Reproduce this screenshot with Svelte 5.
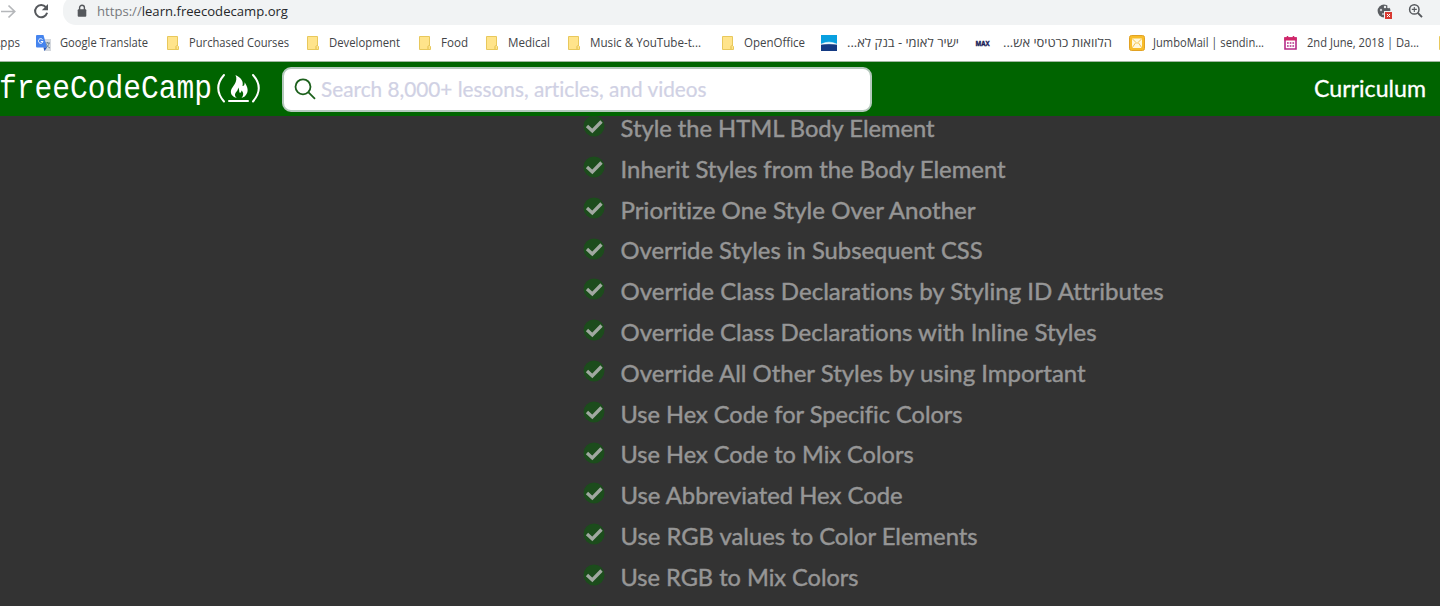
<script>
  const bookmarks = [
    { icon: 'translate', before: 16, iconWidth: 16, gap: 8, label: 'Google Translate', width: 88 },
    { icon: 'folder', before: 19, iconWidth: 12, gap: 10, label: 'Purchased Courses', width: 100 },
    { icon: 'folder', before: 18, iconWidth: 12, gap: 10, label: 'Development', width: 71 },
    { icon: 'folder', before: 19, iconWidth: 12, gap: 10, label: 'Food', width: 27 },
    { icon: 'folder', before: 18, iconWidth: 12, gap: 10, label: 'Medical', width: 42 },
    { icon: 'folder', before: 18, iconWidth: 12, gap: 10, label: 'Music & YouTube-t...', width: 111 },
    { icon: 'folder', before: 21, iconWidth: 12, gap: 10, label: 'OpenOffice', width: 61 },
    { icon: 'bank', before: 16, iconWidth: 16, gap: 10, label: 'ישיר לאומי - בנק לא...', width: 112, rtl: true },
    { icon: 'max', before: 16, iconWidth: 15, gap: 13, label: 'הלוואות כרטיסי אש...', width: 109, rtl: true },
    { icon: 'mail', before: 17, iconWidth: 16, gap: 8, label: 'JumboMail | sendin...', width: 111 },
    { icon: 'calendar', before: 20, iconWidth: 13, gap: 10, label: '2nd June, 2018 | Da...', width: 112 },
    { icon: 'folder', before: 20, iconWidth: 12, gap: 0, label: '', width: 0 }
  ];

  const lessons = [
    ['Style the HTML Body Element', 314],
    ['Inherit Styles from the Body Element', 385],
    ['Prioritize One Style Over Another', 355],
    ['Override Styles in Subsequent CSS', 362],
    ['Override Class Declarations by Styling ID Attributes', 543],
    ['Override Class Declarations with Inline Styles', 476],
    ['Override All Other Styles by using Important', 465],
    ['Use Hex Code for Specific Colors', 342],
    ['Use Hex Code to Mix Colors', 293],
    ['Use Abbreviated Hex Code', 282],
    ['Use RGB values to Color Elements', 357],
    ['Use RGB to Mix Colors', 238],
    ['', 0]
  ];
</script>

{#snippet label(text, width, rtl)}
  <svg class="label" width={width} height="20" direction={rtl ? 'rtl' : 'ltr'}>
    <text x={rtl ? width : 0} y="14" textLength={width} lengthAdjust="spacingAndGlyphs">{text}</text>
  </svg>
{/snippet}

<div class="page">
  <div class="toolbar">
    <svg class="nav" width="63" height="24" fill="none">
      <path d="M1 11.5H14M8.5 5.5L14.7 11.5L8.5 17.5" stroke="#b5b7ba" stroke-width="1.7" />
      <path d="M45.9 7.2A6.1 6.1 0 1 0 47.1 12.8" stroke="#55585c" stroke-width="2" />
      <path d="M48 4V10.2H41.8Z" fill="#55585c" />
    </svg>
    <div class="omnibox">
      <svg class="lock" width="10" height="14">
        <path d="M2.6 6V3.6a2.4 2.4 0 0 1 4.8 0V6" fill="none" stroke="#55585c" stroke-width="1.4" />
        <rect x="0.7" y="5.3" width="8.6" height="7.4" rx="1" fill="#55585c" />
      </svg>
      <svg class="url" width="194" height="22">
        <text x="0" y="15" textLength="191" lengthAdjust="spacingAndGlyphs"><tspan fill="#77797d">https://</tspan>learn.freecodecamp.org</text>
      </svg>
      <svg class="actions" width="50" height="22">
        <circle cx="7" cy="10" r="6.4" fill="#5a5d61" />
        <circle cx="4" cy="9" r="1.2" fill="#c9cbce" /><circle cx="8" cy="6" r="1.2" fill="#eef0f2" />
        <circle cx="11.5" cy="6" r="1.3" fill="#eef0f2" /><circle cx="6" cy="13" r="1" fill="#c9cbce" />
        <rect x="7.5" y="10.5" width="8" height="8" fill="#d83a32" stroke="#f1f3f4" />
        <path d="M10 13l3 3m0-3l-3 3" stroke="#fff" stroke-width="1" />
        <g fill="none" stroke="#55585c">
          <circle cx="37.3" cy="8.4" r="4.7" stroke-width="1.5" />
          <path d="M40.8 11.9L45 16.1" stroke-width="2" />
          <path d="M34.8 8.4h5M37.3 5.9v5" stroke-width="1.1" />
        </g>
      </svg>
    </div>
  </div>

  <div class="bookmarks">
    <div class="apps">{@render label('Apps', 27, false)}</div>
    {#each bookmarks as item}
      <div class="bookmark" style:margin-left="{item.before}px" style:gap="{item.gap}px">
        <svg class="favicon" width={item.iconWidth} height="16">
          {#if item.icon === 'folder'}
            <path d="M.5 1.5H10.5V10.5L11.5 11.5V14.5H.5Z" fill="#ffe48b" stroke="#e8c85c" />
            <path d="M9 14V11.5L10.5 10" fill="none" stroke="#e0bd48" />
          {:else if item.icon === 'translate'}
            <path d="M6 4H15V16H8Z" fill="#d4d8de" />
            <path d="M9 8h5M11.5 7v1M13 8c0 2-2 4-3 4.500M10 9c1 2 2 3 4 4" fill="none" stroke="#6f8797" />
            <path d="M1 0H7.500L11 12.500H1Q0 12.500 0 11.500V1Q0 0 1 0Z" fill="#4584ee" />
            <path d="M7.500 12.500H11L8.500 16Z" fill="#2458bd" />
            <path d="M6.500 4.500A2.300 2.300 0 1 0 7 6.500H4.800" fill="none" stroke="#fff" />
          {:else if item.icon === 'bank'}
            <path d="M0 0H16V9H0Z" fill="#08a0e0" /><path d="M0 9H16V16H0Z" fill="#143a83" />
            <path d="M0 9.300Q8 5 16 9.300Q8 8.200 0 9.300Z" fill="#fff" stroke="#fff" stroke-width=".5" />
          {:else if item.icon === 'max'}
            <text class="max" x="0.500" y="10.500" textLength="14" lengthAdjust="spacingAndGlyphs">MAX</text>
          {:else if item.icon === 'mail'}
            <rect x=".5" y=".5" width="15" height="15" rx="2" fill="#f8bd2a" stroke="#e2a223" />
            <path d="M3 3.500H13V13H3Z" fill="#fff8dc" />
            <path d="M3 3.500L8 8.500L13 3.500M3 13L6.500 8M13 13L9.500 8" fill="none" stroke="#f0b52a" stroke-width=".8" />
          {:else}
            <path d="M1 3H12V14H1Z" fill="#fff" stroke="#b52b88" stroke-width="1.600" />
            <path d="M0.300 2.300H12.700V5.500H.300Z" fill="#d12768" /><path d="M3.500 1V4M9.500 1V4" stroke="#d12768" stroke-width="1.500" />
            <path d="M3 8H10.500M3 11H10.500" stroke="#b52b88" stroke-width="1.600" stroke-dasharray="1.700 1" />
          {/if}
        </svg>
        {#if item.label}{@render label(item.label, item.width, item.rtl)}{/if}
      </div>
    {/each}
  </div>

  <header>
    <svg class="logo" width="264" height="54">
      <text class="wordmark" x="-1" y="35.500" textLength="213" lengthAdjust="spacingAndGlyphs">freeCodeCamp</text>
      <g fill="none" stroke="#fff" stroke-width="2" stroke-linecap="round">
        <path d="M224 13Q212.500 26 224 39.500" /><path d="M253 13Q264.500 26 253 39.500" />
        <path d="M229 39H248" />
      </g>
      <path d="M235.500 13C242 16 243.500 20 242.500 24C244.500 24 245 21.500 244.300 20C248 25 249 30 245.500 33.500C244.500 34.800 243 35.600 241.500 36C244.500 32.500 243 29.500 241.300 28.500C241.500 30.500 240.500 31 239.500 30.500C238.800 29.500 239.800 27.500 238 25.500C238.500 29 234.800 30.300 235 33C235 34.400 236 35.300 237 36C232.500 35 230.300 32 231 28.500C231.700 24.500 238.800 20 235.500 13Z" fill="#fff" />
    </svg>
    <div class="search">
      <svg width="24" height="24" fill="none" stroke="#1c601c" stroke-width="1.800">
        <circle cx="10" cy="9.800" r="7.500" /><path d="M15.500 15.300L22 21.800" />
      </svg>
      <svg class="placeholder" width="400" height="36"><text x="0" y="26" textLength="385.500" lengthAdjust="spacingAndGlyphs">Search 8,000+ lessons, articles, and videos</text></svg>
    </div>
    <svg class="curriculum" width="114" height="36"><text x="0" y="26" textLength="112" lengthAdjust="spacingAndGlyphs">Curriculum</text></svg>
  </header>

  <main>
    <ul>
      {#each lessons as [title, width]}
        <li>
          <svg class="check" width="24" height="24">
            <circle cx="12" cy="12" r="10.500" fill="#1c4c1c" />
            <path d="M5 12L10.300 17L19.500 7.500" fill="none" stroke="#a1a8a1" stroke-width="3.300" />
          </svg>
          {#if title}
            <svg class="lesson" width={width + 4} height="36"><text x="0.600" y="26.500" textLength={width} lengthAdjust="spacingAndGlyphs">{title}</text></svg>
          {/if}
        </li>
      {/each}
    </ul>
  </main>
</div>

<style>
  :global(body) { margin: 0; }
  .page { width: 1440px; height: 606px; overflow: hidden; display: flex; flex-direction: column; background: #fff; }
  svg { display: block; flex: none; }
  .toolbar { height: 25px; display: flex; flex: none; }
  .omnibox { flex: 1; background: #f1f3f4; border-radius: 13px 0 0 13px; margin-top: -4px; padding: 4px 13px 0 14px; display: flex; align-items: flex-start; }
  .lock { margin-top: 4px; }
  .url { margin-left: 10px; margin-top: 1px; font: 13px "Open Sans", sans-serif; fill: #25272a; }
  .actions { margin-left: auto; margin-top: 1px; }
  .bookmarks { height: 36px; flex: none; display: flex; align-items: center; border-bottom: 1px solid #a0b8a0; }
  .apps { margin-left: -7px; }
  .bookmark { display: flex; align-items: center; flex: none; }
  .label { overflow: visible; font: 12px "Open Sans", "Noto Sans", sans-serif; fill: #424447; }
  .favicon { overflow: visible; }
  .max { font: bold 7px "Open Sans", sans-serif; fill: #171b56; stroke: #171b56; stroke-width: .4; }
  header { height: 54px; flex: none; display: flex; align-items: center; background: #006400; position: relative; z-index: 1; }
  .wordmark { font: 34px "Liberation Mono", monospace; fill: #fff; }
  .search { box-sizing: border-box; width: 590px; height: 45px; margin-left: 18px; border: 2px solid #b5c9bd; border-radius: 9px; background: #fff; display: flex; align-items: center; padding-left: 9px; gap: 4px; }
  .placeholder { font: 22px Lato, sans-serif; font-variant-ligatures: none; fill: #d0d1e4; stroke: #d0d1e4; stroke-width: .2; }
  .curriculum { margin-left: auto; margin-right: 12px; font: 23px Lato, sans-serif; fill: #fff; stroke: #fff; stroke-width: .3; }
  main { flex: 1; min-height: 0; background: #333; }
  ul { list-style: none; margin: -8px 0 0; padding: 0 0 0 582px; }
  li { height: 40.780px; display: flex; align-items: center; gap: 14px; }
  .check { margin-top: -4px; }
  .lesson { margin-top: -.4px; overflow: visible; font: 24px Lato, sans-serif; font-variant-ligatures: none; fill: #969696; stroke: #969696; stroke-width: .45; }
</style>
